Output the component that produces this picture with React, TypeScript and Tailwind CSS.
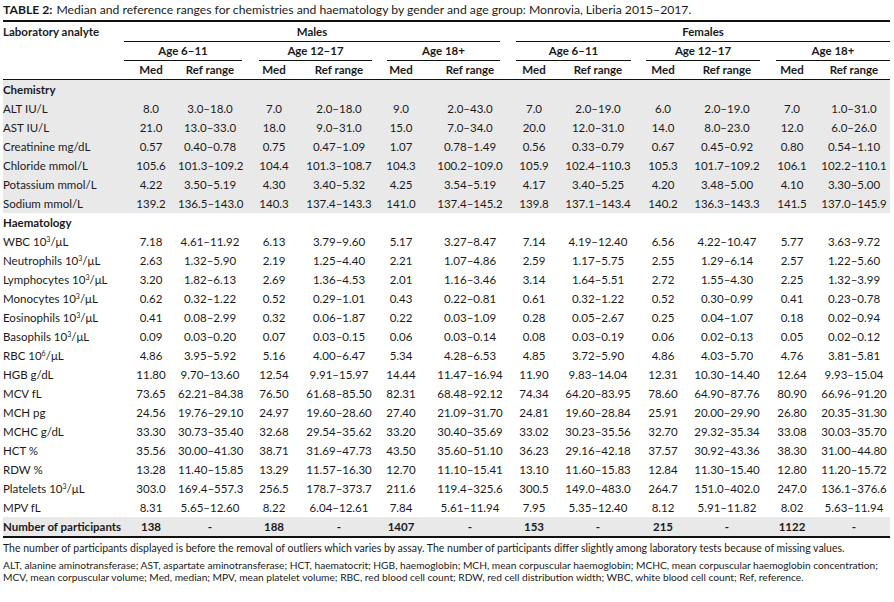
import clsx from "clsx"

type Row = { label: React.ReactNode; values: string[] }

const mu = "\u03bc"
const Ten = ({ p }: { p: string }) => (
  <span>
    10<sup className="text-[7px] -top-[4px]">{p}</sup>/{mu}L
  </span>
)

const chemistry: Row[] = [
  { label: "ALT IU/L", values: ["8.0", "3.0–18.0", "7.0", "2.0–18.0", "9.0", "2.0–43.0", "7.0", "2.0–19.0", "6.0", "2.0–19.0", "7.0", "1.0–31.0"] },
  { label: "AST IU/L", values: ["21.0", "13.0–33.0", "18.0", "9.0–31.0", "15.0", "7.0–34.0", "20.0", "12.0–31.0", "14.0", "8.0–23.0", "12.0", "6.0–26.0"] },
  { label: "Creatinine mg/dL", values: ["0.57", "0.40–0.78", "0.75", "0.47–1.09", "1.07", "0.78–1.49", "0.56", "0.33–0.79", "0.67", "0.45–0.92", "0.80", "0.54–1.10"] },
  { label: "Chloride mmol/L", values: ["105.6", "101.3–109.2", "104.4", "101.3–108.7", "104.3", "100.2–109.0", "105.9", "102.4–110.3", "105.3", "101.7–109.2", "106.1", "102.2–110.1"] },
  { label: "Potassium mmol/L", values: ["4.22", "3.50–5.19", "4.30", "3.40–5.32", "4.25", "3.54–5.19", "4.17", "3.40–5.25", "4.20", "3.48–5.00", "4.10", "3.30–5.00"] },
  { label: "Sodium mmol/L", values: ["139.2", "136.5–143.0", "140.3", "137.4–143.3", "141.0", "137.4–145.2", "139.8", "137.1–143.4", "140.2", "136.3–143.3", "141.5", "137.0–145.9"] },
]

const haematology: Row[] = [
  { label: <>WBC <Ten p="3" /></>, values: ["7.18", "4.61–11.92", "6.13", "3.79–9.60", "5.17", "3.27–8.47", "7.14", "4.19–12.40", "6.56", "4.22–10.47", "5.77", "3.63–9.72"] },
  { label: <>Neutrophils <Ten p="3" /></>, values: ["2.63", "1.32–5.90", "2.19", "1.25–4.40", "2.21", "1.07–4.86", "2.59", "1.17–5.75", "2.55", "1.29–6.14", "2.57", "1.22–5.60"] },
  { label: <>Lymphocytes <Ten p="3" /></>, values: ["3.20", "1.82–6.13", "2.69", "1.36–4.53", "2.01", "1.16–3.46", "3.14", "1.64–5.51", "2.72", "1.55–4.30", "2.25", "1.32–3.99"] },
  { label: <>Monocytes <Ten p="3" /></>, values: ["0.62", "0.32–1.22", "0.52", "0.29–1.01", "0.43", "0.22–0.81", "0.61", "0.32–1.22", "0.52", "0.30–0.99", "0.41", "0.23–0.78"] },
  { label: <>Eosinophils <Ten p="3" /></>, values: ["0.41", "0.08–2.99", "0.32", "0.06–1.87", "0.22", "0.03–1.09", "0.28", "0.05–2.67", "0.25", "0.04–1.07", "0.18", "0.02–0.94"] },
  { label: <>Basophils <Ten p="3" /></>, values: ["0.09", "0.03–0.20", "0.07", "0.03–0.15", "0.06", "0.03–0.14", "0.08", "0.03–0.19", "0.06", "0.02–0.13", "0.05", "0.02–0.12"] },
  { label: <>RBC <Ten p="6" /></>, values: ["4.86", "3.95–5.92", "5.16", "4.00–6.47", "5.34", "4.28–6.53", "4.85", "3.72–5.90", "4.86", "4.03–5.70", "4.76", "3.81–5.81"] },
  { label: "HGB g/dL", values: ["11.80", "9.70–13.60", "12.54", "9.91–15.97", "14.44", "11.47–16.94", "11.90", "9.83–14.04", "12.31", "10.30–14.40", "12.64", "9.93–15.04"] },
  { label: "MCV fL", values: ["73.65", "62.21–84.38", "76.50", "61.68–85.50", "82.31", "68.48–92.12", "74.34", "64.20–83.95", "78.60", "64.90–87.76", "80.90", "66.96–91.20"] },
  { label: "MCH pg", values: ["24.56", "19.76–29.10", "24.97", "19.60–28.60", "27.40", "21.09–31.70", "24.81", "19.60–28.84", "25.91", "20.00–29.90", "26.80", "20.35–31.30"] },
  { label: "MCHC g/dL", values: ["33.30", "30.73–35.40", "32.68", "29.54–35.62", "33.20", "30.40–35.69", "33.02", "30.23–35.56", "32.70", "29.32–35.34", "33.08", "30.03–35.70"] },
  { label: "HCT %", values: ["35.56", "30.00–41.30", "38.71", "31.69–47.73", "43.50", "35.60–51.10", "36.23", "29.16–42.18", "37.57", "30.92–43.36", "38.30", "31.00–44.80"] },
  { label: "RDW %", values: ["13.28", "11.40–15.85", "13.29", "11.57–16.30", "12.70", "11.10–15.41", "13.10", "11.60–15.83", "12.84", "11.30–15.40", "12.80", "11.20–15.72"] },
  { label: <>Platelets <Ten p="3" /></>, values: ["303.0", "169.4–557.3", "256.5", "178.7–373.7", "211.6", "119.4–325.6", "300.5", "149.0–483.0", "264.7", "151.0–402.0", "247.0", "136.1–376.6"] },
  { label: "MPV fL", values: ["8.31", "5.65–12.60", "8.22", "6.04–12.61", "7.84", "5.61–11.94", "7.95", "5.35–12.40", "8.12", "5.91–11.82", "8.02", "5.63–11.94"] },
]

const participants = ["138", "-", "188", "-", "1407", "-", "153", "-", "215", "-", "1122", "-"]

// same column template on every row so the columns line up
const grid = "grid grid-cols-[121px_54px_64px_64px_66px_58px_80px_48px_80px_50px_78px_52px_72px]"

const DataRow = ({ row, shaded, bold }: { row: Row; shaded?: boolean; bold?: boolean }) => (
  <div className={clsx(grid, "h-[19px] items-center", shaded && "bg-[#e9e9e9]", bold && "font-bold")}>
    <div className="whitespace-nowrap">{row.label}</div>
    {row.values.map((v, i) => (
      <div key={i} className="text-center whitespace-nowrap">{v}</div>
    ))}
  </div>
)

const SectionRow = ({ title, shaded }: { title: string; shaded?: boolean }) => (
  <div className={clsx("h-[19px] flex items-center font-bold", shaded && "bg-[#e9e9e9]")}>{title}</div>
)

const App = () => {
  return (
    <div className="w-[894px] h-[602px] bg-white pl-[3px] text-[#1b1b1b] font-[Lato,sans-serif] overflow-hidden">
      <div className="h-[20px] flex items-center text-[12.2px] whitespace-nowrap">
        <span className="font-bold">TABLE 2:</span>
        <span className="ml-[4px]">Median and reference ranges for chemistries and haematology by gender and age group: Monrovia, Liberia 2015–2017.</span>
      </div>
      <div className="w-[887px] text-[11.5px]">
        <div className="h-[2px] bg-[#111]" />

        <div className={clsx(grid, "h-[20px] font-bold")}>
          <div className="flex items-center">Laboratory analyte</div>
          <div className="col-span-6 mr-[10px] border-b border-[#111] flex items-center justify-center">Males</div>
          <div className="col-span-6 ml-[6px] border-b border-[#111] flex items-center justify-center">Females</div>
        </div>

        <div className={clsx(grid, "h-[19px] font-bold")}>
          <div />
          <div className="col-span-2 border-b border-[#111] flex items-center justify-center">Age 6–11</div>
          <div className="col-span-2 ml-[17px] border-b border-[#111] flex items-center justify-center">Age 12–17</div>
          <div className="col-span-2 ml-[15px] mr-[10px] border-b border-[#111] flex items-center justify-center">Age 18+</div>
          <div className="col-span-2 ml-[6px] mr-[7px] border-b border-[#111] flex items-center justify-center">Age 6–11</div>
          <div className="col-span-2 ml-[8px] mr-[6px] border-b border-[#111] flex items-center justify-center">Age 12–17</div>
          <div className="col-span-2 ml-[10px] border-b border-[#111] flex items-center justify-center">Age 18+</div>
        </div>

        <div className={clsx(grid, "h-[19px] items-center font-bold border-b border-[#111]")}>
          <div />
          {[0, 1, 2, 3, 4, 5].map(i => (
            <div key={i} className="contents">
              <div className="text-center">Med</div>
              <div className="text-center">Ref range</div>
            </div>
          ))}
        </div>

        <SectionRow title="Chemistry" shaded />
        {chemistry.map((row, i) => (
          <DataRow key={i} row={row} shaded />
        ))}
        <SectionRow title="Haematology" />
        {haematology.map((row, i) => (
          <DataRow key={i} row={row} />
        ))}
        <DataRow row={{ label: "Number of participants", values: participants }} shaded bold />
        <div className="h-[2px] bg-[#111]" />
      </div>

      <div className="pt-[4px] leading-[12px] whitespace-nowrap">
        <p className="text-[10.5px]">The number of participants displayed is before the removal of outliers which varies by assay. The number of participants differ slightly among laboratory tests because of missing values.</p>
        <p className="mt-[5px] text-[10.2px]">
          ALT, alanine aminotransferase; AST, aspartate aminotransferase; HCT, haematocrit; HGB, haemoglobin; MCH, mean corpuscular haemoglobin; MCHC, mean corpuscular haemoglobin concentration;
          <br />
          MCV, mean corpuscular volume; Med, median; MPV, mean platelet volume; RBC, red blood cell count; RDW, red cell distribution width; WBC, white blood cell count; Ref, reference.
        </p>
      </div>
    </div>
  )
}

export default App
